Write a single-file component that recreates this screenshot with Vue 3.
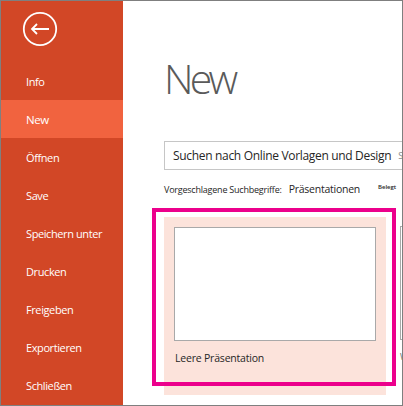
<script setup>
const items = [
  { label: 'Info', active: false },
  { label: 'New', active: true },
  { label: 'Öffnen', active: false },
  { label: 'Save', active: false },
  { label: 'Speichern unter', active: false },
  { label: 'Drucken', active: false },
  { label: 'Freigeben', active: false },
  { label: 'Exportieren', active: false },
  { label: 'Schließen', active: false },
]
</script>

<template>
  <div class="frame">
    <aside class="side">
      <div class="back">
        <svg width="36" height="36" viewBox="0 0 36 36" fill="none" stroke="#fff">
          <circle cx="18" cy="18" r="16.2" stroke-width="1.8" />
          <path d="M10 18H27M15 13L10 18L15 23" stroke-width="1.8" />
        </svg>
      </div>
      <ul class="menu">
        <li v-for="item in items" :key="item.label" class="item" :class="{ active: item.active }">{{ item.label }}</li>
      </ul>
    </aside>
    <main class="content">
      <h1 class="title">New</h1>
      <div class="search">
        <span class="query">Suchen nach Online Vorlagen und Design</span>
        <span class="cut">S</span>
      </div>
      <div class="terms">
        <span class="lead">Vorgeschlagene Suchbegriffe:</span>
        <span class="term">Präsentationen</span>
        <span class="tiny">Belegt</span>
      </div>
      <div class="cards">
        <div class="card">
          <div class="thumb"></div>
          <div class="name">Leere Präsentation</div>
        </div>
        <div class="next">
          <div class="next-thumb"></div>
          <div class="next-name">W</div>
        </div>
      </div>
      <div class="mark"></div>
    </main>
  </div>
</template>

<style>
html, body { margin: 0; background: #fff; }
</style>

<style scoped>
.frame {
  width: 403px;
  height: 406px;
  box-sizing: border-box;
  border: 1px solid #7f7f7f;
  display: flex;
  overflow: hidden;
  font-family: "Open Sans", "Liberation Sans", sans-serif;
}
.side {
  width: 122px;
  flex: none;
  background: #d24726;
  color: #fff;
}
.back {
  height: 61px;
  padding: 10px 0 0 21px;
  box-sizing: border-box;
}
.back svg { display: block; }
.menu {
  list-style: none;
  margin: 0;
  padding: 0;
}
.item {
  height: 38px;
  line-height: 39px;
  padding-left: 25px;
  font-size: 11px;
  letter-spacing: -0.4px;
}
.item.active { background: #f1633f; font-size: 11.5px; }
.content {
  position: relative;
  flex: 1;
  min-width: 0;
  padding-left: 41px;
  overflow: hidden;
}
.title {
  margin: 0;
  padding-top: 52px;
  height: 140px;
  box-sizing: border-box;
  font-weight: 300;
  font-size: 41px;
  line-height: 50px;
  letter-spacing: -3.8px;
  color: #5a5a5a;
}
.search {
  height: 29px;
  box-sizing: border-box;
  border: 1px solid #c6c6c6;
  border-right: 0;
  display: flex;
  align-items: center;
  gap: 7px;
  padding-left: 8px;
  font-size: 12px;
  letter-spacing: -0.32px;
  color: #262626;
  white-space: nowrap;
  overflow: hidden;
}
.cut { font-size: 9px; color: #8a8a8a; }
.terms {
  display: flex;
  align-items: center;
  height: 20px;
  margin-top: 9px;
  color: #262626;
  white-space: nowrap;
}
.lead { font-size: 9px; letter-spacing: -0.22px; }
.term { font-size: 10.5px; margin-left: 7px; letter-spacing: -0.25px; }
.tiny { font-size: 6px; margin-left: 18px; font-weight: 600; margin-top: -4px; }
.cards {
  display: flex;
  gap: 14px;
  margin-top: 18px;
}
.card {
  width: 222px;
  height: 178px;
  flex: none;
  box-sizing: border-box;
  background: #fce3db;
  padding: 10px 10px 0;
}
.thumb {
  height: 114px;
  box-sizing: border-box;
  background: #fff;
  border: 1px solid #a9a9a9;
}
.name {
  font-size: 10.5px;
  line-height: 16px;
  margin-top: 9px;
  padding-left: 1px;
  color: #262626;
  letter-spacing: -0.2px;
}
.mark {
  position: absolute;
  left: 29px;
  top: 207px;
  width: 244px;
  height: 178px;
  box-sizing: border-box;
  border: 4px solid #ec008c;
}
.next { flex: none; padding-top: 9px; color: #666; font-size: 9px; }
.next-thumb { width: 30px; height: 114px; box-sizing: border-box; border: 1px solid #a9a9a9; }
.next-name { margin-top: 9px; line-height: 16px; }
</style>
